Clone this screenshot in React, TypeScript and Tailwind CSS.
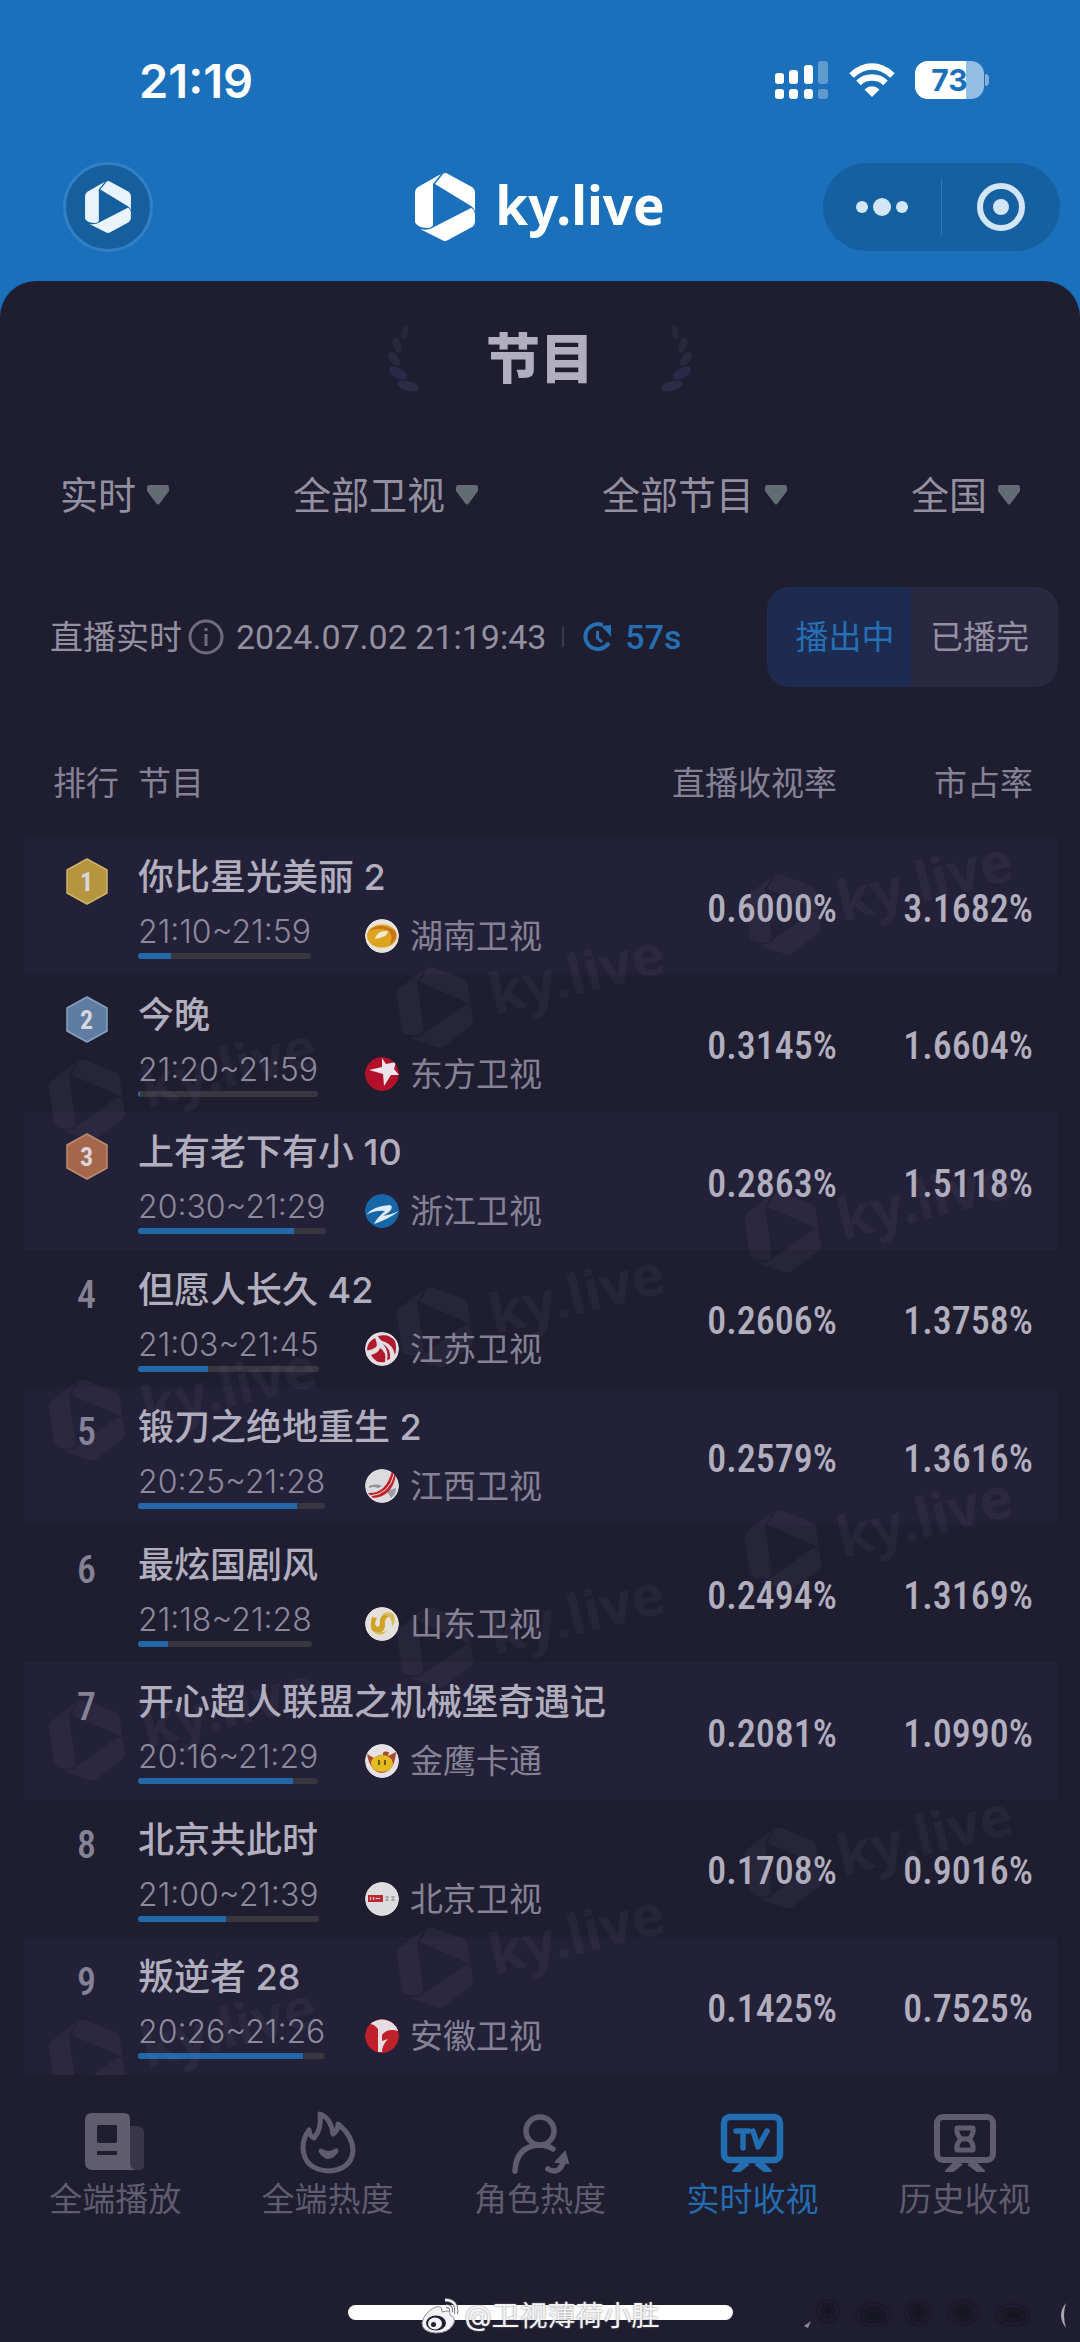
import React from "react";

const SANS = "font-['Inter','Noto_Sans_CJK_SC',sans-serif]";
const NARROW = "font-['Roboto_Condensed','Roboto',sans-serif]";

function HexPlay({ className }: { className?: string }) {
  return (
    <svg viewBox="0 0 60 68" className={className} fill="currentColor" aria-hidden="true">
      <path d="M26 1 L18 11 V52 Q17 55 12 55 Q5 55 1 51 Q0 50 0 48 V20 Q0 16 3 14 Z" />
      <path d="M28 1 Q30 -1 33 1 L57 14 Q60 16 60 20 V38 Q59 35 56 33 L20 11 Z" />
      <path d="M60 41 V48 Q60 52 57 54 L33 67 Q30 69 27 67 L5 56 Q13 58 19 54 L56 35 Q59 36 60 41Z" />
    </svg>
  );
}

function StatusBar() {
  return (
    <div className="flex h-40 items-center justify-between pl-[139px] pr-[91px]">
      <time className="text-[47px] leading-none font-semibold text-white">21:19</time>
      <div className="flex items-center gap-5">
        <svg viewBox="0 0 54 38" className="h-[38px] w-[54px]" fill="white" aria-label="信号">
          <rect x="0" y="12" width="9" height="11" rx="3" />
          <rect x="14" y="9" width="9" height="14" rx="3" />
          <rect x="29" y="4" width="9" height="19" rx="3" />
          <rect x="43" y="0" width="10" height="23" rx="3" opacity=".3" />
          <rect x="0" y="28" width="9" height="10" rx="3" />
          <rect x="14" y="28" width="9" height="10" rx="3" />
          <rect x="29" y="28" width="9" height="10" rx="3" />
          <rect x="43" y="28" width="10" height="10" rx="3" opacity=".3" />
        </svg>
        <svg viewBox="0 0 46 35" className="h-[35px] w-[46px]" fill="none" stroke="white" strokeWidth="6.500" aria-label="无线网络">
          <path d="M2.500 12.500 Q12 3.500 23 3.500 T43.500 12.500" />
          <path d="M9.500 19.800 Q15 14.500 23 14.500 T36.500 19.800" />
          <path d="M23 34 L15.500 26.500 Q23 20 30.500 26.500 Z" fill="white" stroke="none" />
        </svg>
        <div className="flex items-center gap-px">
          <div className="relative flex h-[38px] w-[69px] items-center justify-center overflow-hidden rounded-[13px] bg-[#93bfe4]">
            <span className="absolute inset-y-0 left-0 w-[51px] bg-white" />
            <span className="relative text-[30px] leading-none font-bold text-[#1a70bb]">73</span>
          </div>
          <span className="h-3 w-1 rounded-r-full bg-[#7fb0da]" />
        </div>
      </div>
    </div>
  );
}

function Header() {
  return (
    <div className="grid h-[94px] grid-cols-[1fr_auto_1fr] items-center px-5">
      <button
        aria-label="主页"
        className="ml-[43px] flex size-[90px] items-center justify-center rounded-full border-3 border-[#317fc4] bg-[#155f9f] text-[#e8f3fc]"
      >
        <HexPlay className="h-[52px] w-[46px]" />
      </button>
      <div className="flex items-center gap-5 text-white">
        <HexPlay className="h-[68px] w-[60px]" />
        <span className="pb-1 font-['Noto_Sans',sans-serif] text-[53px] leading-[68px] font-bold">ky.live</span>
      </div>
      <div className="flex h-[88px] w-[237px] items-center justify-self-end rounded-full bg-[#1560a0]">
        <button aria-label="更多" className="flex h-full flex-1 items-center justify-center gap-[5px]">
          <span className="size-3 rounded-full bg-[#d3e6f5]" />
          <span className="size-[18px] rounded-full bg-[#d3e6f5]" />
          <span className="size-3 rounded-full bg-[#d3e6f5]" />
        </button>
        <span className="h-14 w-px bg-[#2e79b8]" />
        <button aria-label="关闭" className="flex h-full flex-1 items-center justify-center">
          <span className="flex size-12 items-center justify-center rounded-full border-[6px] border-[#d3e6f5]">
            <span className="size-4 rounded-full bg-[#d3e6f5]" />
          </span>
        </button>
      </div>
    </div>
  );
}

function Laurel({ className }: { className?: string }) {
  return (
    <svg viewBox="0 0 34 70" className={className} aria-hidden="true">
      <ellipse cx="19" cy="7" rx="3.500" ry="8" transform="rotate(12 19 7)" fill="#282639" />
      <ellipse cx="11" cy="20" rx="4" ry="8" transform="rotate(-20 11 20)" fill="#29273b" />
      <ellipse cx="8" cy="34" rx="4.500" ry="8" transform="rotate(-38 8 34)" fill="#2b293e" />
      <ellipse cx="12" cy="48" rx="5" ry="10" transform="rotate(-60 12 48)" fill="#2b2949" />
      <ellipse cx="22" cy="61" rx="5" ry="11" transform="rotate(-75 22 61)" fill="#2d2b45" />
    </svg>
  );
}

function Filters() {
  return (
    <div className="flex items-center justify-between px-15">
      {["实时", "全部卫视", "全部节目", "全国"].map((label) => (
        <label key={label} className="flex items-center gap-[11px]">
          <select
            aria-label={label}
            className="field-sizing-content appearance-none bg-transparent p-0 text-[38px] leading-[52px] text-[#93909f]"
          >
            <option>{label}</option>
          </select>
          <svg viewBox="0 0 22 20" className="h-5 w-[22px]" fill="#636b74" aria-hidden="true">
            <path d="M2 0 H20 Q22 0 22 3 V6 L13 18 Q11 21 9 18 L0 6 V3 Q0 0 2 0Z" />
          </svg>
        </label>
      ))}
    </div>
  );
}

function InfoRow() {
  return (
    <div className="flex h-[100px] items-center pr-[22px] pl-[50px] text-[33px] leading-10 text-[#93909f]">
      <span>直播实时</span>
      <button aria-label="说明" className="ml-[6px]">
        <svg viewBox="0 0 36 36" className="size-9" fill="none" stroke="#6f6c7d" strokeWidth="3">
          <circle cx="18" cy="18" r="16" />
          <path d="M18 15 V27 M18 9 V12" />
        </svg>
      </button>
      <time className="ml-3 font-['Roboto'] text-[34px]">2024.07.02 21:19:43</time>
      <span className="ml-4 h-5 w-0.5 bg-[#3b394d]" />
      <svg viewBox="0 0 30 30" className="ml-[19px] size-[30px]" fill="none" stroke="#256fb4" strokeWidth="4" aria-hidden="true">
        <path d="M18 2.500 A12.500 12.500 0 1 0 25 22" strokeLinecap="round" />
        <path d="M14.500 9 V16 L19 20" strokeWidth="3" />
        <path d="M18 4 L28 3 V15 L24 10 Z" fill="#256fb4" stroke="none" />
      </svg>
      <span className="ml-3 font-['Roboto'] text-[34px] font-medium text-[#256fb4]">57s</span>
      <div className="ml-auto flex h-full overflow-hidden rounded-[22px]">
        <button className="w-36 bg-[#1d2b50] pl-3 text-[#256fb4]">播出中</button>
        <button className="w-[147px] bg-[#2a2841] pr-2.5">已播完</button>
      </div>
    </div>
  );
}

const LOGOS: Record<string, React.ReactNode> = {
  湖南卫视: (
    <>
      <circle cx="17" cy="17" r="17" fill="#e8e4dc" />
      <ellipse cx="17" cy="17" rx="15" ry="11.500" fill="#dda51f" />
      <path d="M4 12 Q14 2 30 12 Q34 20 24 26 Q30 16 22 11 Q14 8 4 12Z" fill="#c9741c" />
      <path d="M10 20 Q12 11 23 12 Q23 18 10 20Z" fill="#f3ead2" />
    </>
  ),
  东方卫视: (
    <>
      <circle cx="17" cy="17" r="17" fill="#b3102b" />
      <path d="M17 1 L21 7 L31 5 L29 12 L34 18 L26 18 L19 29 L18 17 L4 13 L17 10 Z" fill="#ece4ea" />
    </>
  ),
  浙江卫视: (
    <>
      <circle cx="17" cy="17" r="17" fill="#1767a8" />
      <path d="M1 21 Q8 12 25 11 Q29 13 24 18 L18 22 Q26 21 34 17 Q24 25 9 30 Q11 25 20 17 Q10 16 1 21Z" fill="#e2ecf4" />
    </>
  ),
  江苏卫视: (
    <>
      <circle cx="17" cy="17" r="17" fill="#e2dde2" />
      <path d="M13 4 Q24 1 30 9 Q32 16 30 23 Q28 13 20 10 Q15 9 13 4Z" fill="#b0182e" />
      <path d="M10 6 Q13 13 11 15 Q6 19 2 18 Q2 10 10 6Z" fill="#b0182e" />
      <path d="M6 23 Q14 21 15 16 Q22 20 20 30 Q11 32 6 23Z" fill="#b0182e" />
      <path d="M18 12 Q26 16 25 27 L22 28 Q24 19 18 12Z" fill="#b0182e" />
    </>
  ),
  江西卫视: (
    <>
      <circle cx="17" cy="17" r="17" fill="#dcdbdf" />
      <path d="M4 17 Q12 14 17 17 L13 19 Q9 17 4 19Z" fill="#8d9096" />
      <path d="M22 22 L31 19 Q31 26 26 29Z" fill="#9a9da5" />
      <path d="M27 2 L31 6 Q27 28 8 29 L3 24 Q21 25 27 2Z" fill="#c0232b" />
      <path d="M29 5 Q25 25 5 27" stroke="#eadfe1" strokeWidth="1" fill="none" />
    </>
  ),
  山东卫视: (
    <>
      <circle cx="17" cy="17" r="17" fill="#e4e1dc" />
      <path d="M7 10 Q3 26 13 26 Q21 24 20 17 Q19 9 28 9 Q24 6 18 8 Q14 11 15 17 Q14 21 11 19 Q9 16 12 11 Z" fill="#d0a325" />
      <path d="M17 7 Q25 3 29 8 Q31 14 27 20 Q27 12 24 10 Q21 8 17 7Z" fill="#d9bc54" />
      <path d="M8 24 Q14 31 22 24 Q15 26 8 24Z" fill="#d9bc54" />
    </>
  ),
  金鹰卡通: (
    <>
      <circle cx="17" cy="17" r="17" fill="#e6e1e4" />
      <path d="M2 10 L9 14 Q15 10 18 11 Q17 6 24 8 L23 12 L31 8 Q30 27 17 29 Q5 28 2 10Z" fill="#a84a2c" />
      <ellipse cx="17" cy="19.500" rx="11" ry="8.500" fill="#e2bc21" />
      <path d="M14 16 V21 M20 16 V21" stroke="#4a3714" strokeWidth="1.500" />
    </>
  ),
  北京卫视: (
    <>
      <circle cx="17" cy="17" r="17" fill="#dddcdf" />
      <rect x="3" y="13" width="15" height="7" fill="#b82a31" />
      <path d="M5.500 15 V18 M8.500 15 V18 M10.500 16.500 H15" stroke="#e7c9cd" strokeWidth="1.200" />
      <path d="M20 15 H24 M20 18 H24 M22 14 V19 M26 15 H30 M26 18 H30 M28 14 V19" stroke="#94949b" />
    </>
  ),
  安徽卫视: (
    <>
      <circle cx="17" cy="17" r="17" fill="#c0202a" />
      <path d="M5 5 Q17 -4 29 5 Q33 9 33 12 Q22 9 17 16 V22 L23 20 Q17 26 17 33 L13 33 Q13 18 13 10 Q9 5 5 5Z" fill="#e4dde2" />
      <path d="M19 15 Q26 11 31 15 Q28 20 19 19Z" fill="#c0202a" />
    </>
  ),
};

type Show = { name: string; time: string; station: string; rate: string; share: string; done: number };

const SHOWS: Show[] = [
  { name: "你比星光美丽 2", time: "21:10~21:59", station: "湖南卫视", rate: "0.6000%", share: "3.1682%", done: 19 },
  { name: "今晚", time: "21:20~21:59", station: "东方卫视", rate: "0.3145%", share: "1.6604%", done: 1 },
  { name: "上有老下有小 10", time: "20:30~21:29", station: "浙江卫视", rate: "0.2863%", share: "1.5118%", done: 83 },
  { name: "但愿人长久 42", time: "21:03~21:45", station: "江苏卫视", rate: "0.2606%", share: "1.3758%", done: 39 },
  { name: "锻刀之绝地重生 2", time: "20:25~21:28", station: "江西卫视", rate: "0.2579%", share: "1.3616%", done: 85 },
  { name: "最炫国剧风", time: "21:18~21:28", station: "山东卫视", rate: "0.2494%", share: "1.3169%", done: 17 },
  { name: "开心超人联盟之机械堡奇遇记", time: "20:16~21:29", station: "金鹰卡通", rate: "0.2081%", share: "1.0990%", done: 86 },
  { name: "北京共此时", time: "21:00~21:39", station: "北京卫视", rate: "0.1708%", share: "0.9016%", done: 49 },
  { name: "叛逆者 28", time: "20:26~21:26", station: "安徽卫视", rate: "0.1425%", share: "0.7525%", done: 88 },
];

const MEDALS = [
  { fill: "#b5953f", edge: "#cdb369" },
  { fill: "#5f7da3", edge: "#86a0c0" },
  { fill: "#a5674a", edge: "#c08a70" },
];

function Rank({ index }: { index: number }) {
  const medal = MEDALS[index];
  if (!medal) {
    return <span className={`block text-center text-[38px] leading-[49px] font-medium text-[#858295] ${NARROW}`}>{index + 1}</span>;
  }
  return (
    <span className="relative mx-auto flex h-[47px] w-[42px] items-center justify-center">
      <svg viewBox="0 0 42 47" className="absolute inset-0 size-full" aria-hidden="true">
        <path d="M21 1 L41 12 V35 L21 46 L1 35 V12Z" fill={medal.fill} stroke={medal.edge} strokeWidth="1.500" strokeLinejoin="round" />
      </svg>
      <span className={`relative text-[26px] leading-none font-bold text-[#d9d6dc] ${NARROW}`}>{index + 1}</span>
    </span>
  );
}

const MARKS = [0, 1, 2, 3].flatMap((i) => [
  { left: 52, top: 337 + i * 320 },
  { left: 400, top: 244 + i * 320 },
  { left: 748, top: 151 + i * 318 },
]);

function Watermarks() {
  return (
    <div aria-hidden="true" className="pointer-events-none absolute inset-0 overflow-hidden">
      {MARKS.map((m, i) => (
        <div
          key={i}
          className="absolute flex origin-left -rotate-14 items-center gap-5 text-[#8f8cae] opacity-7"
          style={{ left: m.left, top: m.top }}
        >
          <HexPlay className="h-[82px] w-[72px] rotate-6" />
          <span className="font-['Noto_Sans',sans-serif] text-[56px] leading-[80px] font-bold">ky.live</span>
        </div>
      ))}
    </div>
  );
}

function Ranking() {
  return (
    <div className="relative mt-11 overflow-hidden pr-[23px] pl-6">
      <table className="w-full table-fixed border-collapse text-left text-[33px]">
        <colgroup>
          <col className="w-[114px]" />
          <col />
          <col className="w-[220px]" />
          <col className="w-[220px]" />
        </colgroup>
        <thead>
          <tr className="h-[106px] text-[#858295]">
            <th className="pl-[29px] font-normal">排行</th>
            <th className="font-normal">节目</th>
            <th className="text-right font-normal">直播收视率</th>
            <th className="pr-6 text-right font-normal">市占率</th>
          </tr>
        </thead>
        <tbody>
          {SHOWS.map((s, i) => (
            <tr key={s.name} className="odd:h-[138px] odd:bg-[#232138] even:h-[137px]">
              <td className="p-0 pt-[21px] pr-[27px] pl-[38px] align-top">
                <Rank index={i} />
              </td>
              <td className="p-0 align-top">
                <div className="pt-[15px] text-[36px] leading-[51px] font-medium whitespace-nowrap text-[#b1aebe]">{s.name}</div>
                <div className="flex items-start">
                  <div className="w-[227px]">
                    <div className="w-fit pt-[7px]">
                      <div className="text-[32px] leading-[43px] font-light text-[#8c899b]">{s.time}</div>
                      <div className="h-1.5 overflow-hidden rounded-full bg-[#38373f]">
                        <div className="h-full bg-[#2468aa]" style={{ width: `${s.done}%` }} />
                      </div>
                    </div>
                  </div>
                  <div className="flex items-center gap-[11px] pt-[13px] leading-10 text-[#858295]">
                    <svg viewBox="0 0 34 34" className="size-[34px] rounded-full" aria-hidden="true">
                      {LOGOS[s.station]}
                    </svg>
                    <span className="whitespace-nowrap">{s.station}</span>
                  </div>
                </div>
              </td>
              <td className={`p-0 pt-1.5 text-right text-[38px] font-medium text-[#b1aebe] ${NARROW}`}>{s.rate}</td>
              <td className={`p-0 pt-1.5 pr-6 text-right text-[38px] font-medium text-[#b1aebe] ${NARROW}`}>{s.share}</td>
            </tr>
          ))}
        </tbody>
      </table>
      <Watermarks />
    </div>
  );
}

const iconClass = "size-[66px]";

const TABS = [
  {
    label: "全端播放",
    icon: (
      <svg viewBox="0 0 66 66" className={iconClass} fill="currentColor" aria-hidden="true">
        <path d="M46 17 H55 Q62 17 62 24 V56 Q62 61 57 61 H40 Z" opacity=".4" />
        <path fillRule="evenodd" d="M10 4 H42 Q48 4 48 10 V54 Q48 60 54 61 H11 Q3 61 3 53 V11 Q3 4 10 4Z M15 17 V32 Q15 34 17 34 H33 Q35 34 35 32 V17 Q35 16 33 16 H17 Q15 16 15 17Z M15 42 V46 H35 V42Z" />
      </svg>
    ),
  },
  {
    label: "全端热度",
    icon: (
      <svg viewBox="0 0 66 66" className={iconClass} fill="none" stroke="currentColor" strokeWidth="5" strokeLinejoin="round" strokeLinecap="round" aria-hidden="true">
        <path d="M25 5 Q36 9 38 25 Q43 22 43 15 Q58 27 58 42 Q56 61 33 62 Q9 60 8 39 Q8 29 14 21 Q15 28 19 29 Q27 20 25 5Z" />
        <path d="M26 42 Q33 47 41 42 Q33 53 26 42Z" fill="currentColor" />
      </svg>
    ),
  },
  {
    label: "角色热度",
    icon: (
      <svg viewBox="0 0 66 66" className={iconClass} fill="none" stroke="currentColor" strokeWidth="5.500" strokeLinecap="round" aria-hidden="true">
        <circle cx="33" cy="22" r="14" />
        <path d="M8 62 Q9 37 33 36 Q40 36 46 40" />
        <path d="M41 60 Q51 66 56 54" />
        <path d="M49 53 L58 43 L61 54 Z" fill="currentColor" strokeWidth="2" />
      </svg>
    ),
  },
  {
    label: "实时收视",
    active: true,
    icon: (
      <svg viewBox="0 0 66 66" className={iconClass} fill="none" stroke="currentColor" strokeWidth="6.500" strokeLinejoin="round" aria-hidden="true">
        <rect x="5" y="8" width="56" height="43" rx="6" />
        <path d="M24 52 L14 62 H21 L30 55 M42 52 L52 62 H45 L36 55" fill="currentColor" strokeWidth="2" />
        <path d="M17 22 H30 M24 22 V39 M34 22 L39 38 L48 22" strokeWidth="5.500" strokeLinecap="round" />
      </svg>
    ),
  },
  {
    label: "历史收视",
    icon: (
      <svg viewBox="0 0 66 66" className={iconClass} fill="none" stroke="currentColor" strokeWidth="6" strokeLinejoin="round" aria-hidden="true">
        <rect x="5" y="8" width="56" height="43" rx="6" />
        <path d="M24 52 L14 62 H21 L30 55 M42 52 L52 62 H45 L36 55" fill="currentColor" strokeWidth="2" />
        <path d="M25 19 H41 Q42 25 37 30 Q42 35 41 41 H25 Q24 35 29 30 Q24 25 25 19Z" strokeWidth="5" />
        <path d="M28 30 H38" strokeWidth="5" />
      </svg>
    ),
  },
];

function TabBar() {
  return (
    <nav className="grid grid-cols-5 px-[9px] pt-[34px] pb-[86px]">
      {TABS.map((t) => (
        <button
          key={t.label}
          aria-current={t.active ? "page" : undefined}
          className={`flex flex-col items-center gap-1 text-[33px] leading-10 ${t.active ? "text-[#236db2]" : "text-[#5e5c6d]"}`}
        >
          {t.icon}
          {t.label}
        </button>
      ))}
    </nav>
  );
}

function Footer() {
  return (
    <div className="relative">
      <div className="mx-auto flex h-[15px] w-[385px] items-center justify-center rounded-full bg-white">
        <div className="absolute flex items-center gap-1 pt-1.5 whitespace-nowrap">
          <svg viewBox="0 0 40 36" className="h-9 w-10" aria-hidden="true">
            <path d="M16 9 Q22 7 22 14 Q31 11 30 17 Q37 20 33 27 Q28 35 16 35 Q2 34 2 25 Q4 14 16 9Z" fill="#f2f2f4" stroke="#8d8b97" strokeWidth="1" />
            <ellipse cx="16" cy="25" rx="10" ry="7.500" fill="#1f1d30" />
            <ellipse cx="15" cy="25.500" rx="7" ry="6" fill="#f2f2f4" />
            <circle cx="13.500" cy="26.500" r="2.500" fill="#1f1d30" />
            <path d="M25 2 Q38 2 36 16 M26 8 Q32 8 31 14" fill="none" stroke="#55535f" strokeWidth="4" />
            <path d="M25 2 Q38 2 36 16 M26 8 Q32 8 31 14" fill="none" stroke="#f2f2f4" strokeWidth="2.500" />
          </svg>
          <span className="text-[28px] leading-9 text-[#f4f4f6] [text-shadow:0_0_2px_#777]">@卫视薄荷小胜</span>
        </div>
      </div>
      <svg viewBox="0 0 272 36" className="absolute -top-2 right-2.5 h-9 w-[272px]" aria-hidden="true">
        <defs>
          <filter id="soft">
            <feGaussianBlur stdDeviation="3" />
          </filter>
        </defs>
        <g filter="url(#soft)" fill="#171623">
          <ellipse cx="30" cy="14" rx="8" ry="9" />
          <ellipse cx="75" cy="18" rx="14" ry="9" />
          <ellipse cx="120" cy="16" rx="10" ry="10" />
          <ellipse cx="165" cy="16" rx="12" ry="9" />
          <ellipse cx="215" cy="18" rx="14" ry="8" />
        </g>
        <path d="M6 29 L13 24 L10 31 Z" fill="#8b8a92" />
        <path d="M268 6 Q258 18 268 31 Q264 18 268 6Z" fill="#a9a8ae" />
      </svg>
    </div>
  );
}

export default function App() {
  return (
    <div className={`flex min-h-screen flex-col bg-[#1a70bb] ${SANS}`}>
      <StatusBar />
      <Header />
      <main className="mt-[27px] flex-1 rounded-t-[36px] bg-[#1f1d30] pb-5">
        <div className="flex items-center justify-center gap-[66px] pt-11">
          <Laurel className="h-[70px] w-[34px]" />
          <h1 className="text-[54px] leading-[66px] font-black text-[#b1aebe]">节目</h1>
          <Laurel className="h-[70px] w-[34px] -scale-x-100" />
        </div>
        <div className="mt-[74px]">
          <Filters />
        </div>
        <div className="mt-[66px]">
          <InfoRow />
        </div>
        <Ranking />
        <TabBar />
        <Footer />
      </main>
    </div>
  );
}
